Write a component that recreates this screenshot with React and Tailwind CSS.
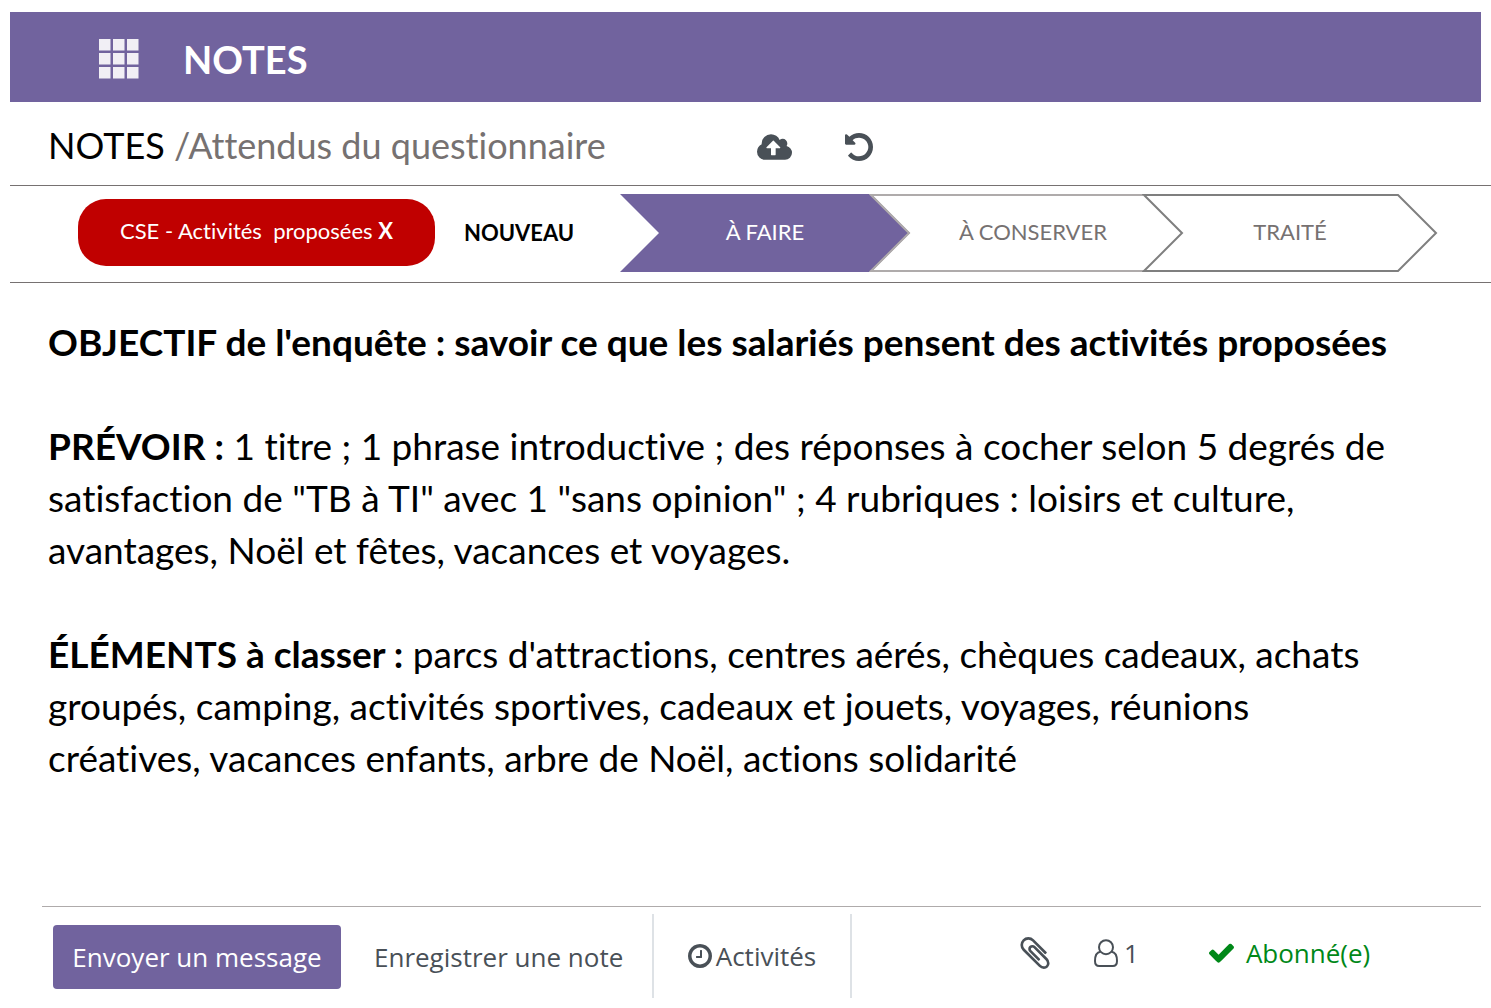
const steps = [
  {
    label: 'À FAIRE',
    box: 'w-[290px]',
    text: 'text-white',
    shape: 'fill-[#71639e] stroke-none',
    viewBox: '0 0 290 78',
    points: '0,0 251,0 290,39 251,78 0,78 39,39 0,0',
  },
  {
    label: 'À CONSERVER',
    box: '-ml-[41px] w-[328px]',
    text: 'text-[#767171]',
    shape: 'fill-none stroke-[#afabab]',
    viewBox: '0 0 328 78',
    points: '274,1 2,1 40,39 2,77 288,77',
  },
  {
    label: 'TRAITÉ',
    box: '-ml-[55px] w-[296px]',
    text: 'text-[#767171]',
    shape: 'fill-none stroke-[#7f7f7f]',
    viewBox: '0 0 296 78',
    points: '2,1 256,1 294,39 256,77 2,77 40,39 2,1 256,1',
  },
]

export default function App() {
  return (
    <div className="min-h-screen bg-white pt-3 pl-[10px] text-black [font-variant-ligatures:none] font-['Lato',sans-serif]">
      {/* Header */}
      <header className="mr-[10px] flex h-[90px] items-center bg-[#71639e] pt-1 pl-[89px] text-white">
        <button type="button" aria-label="Applications">
          <AppsIcon />
        </button>
        <h1 className="ml-11 text-[38px] leading-[52px] font-bold">NOTES</h1>
      </header>

      {/* Breadcrumb */}
      <div className="flex h-[84px] items-center border-b border-[#767171] pt-[6px] pl-[38px]">
        <nav className="w-[709px] pb-1 text-[36px] leading-[52px] whitespace-nowrap">
          <a href="#notes">NOTES</a>{' '}
          <span className="text-[#767171]">/Attendus du questionnaire</span>
        </nav>
        <button type="button" aria-label="Enregistrer" className="text-[#495057]">
          <CloudUploadIcon />
        </button>
        <button type="button" aria-label="Annuler" className="ml-[53px] text-[#495057]">
          <UndoIcon />
        </button>
      </div>

      {/* Tag and status steps */}
      <div className="flex h-[97px] items-center border-b border-[#767171] pb-[3px] pl-[68px] text-[22px] whitespace-nowrap">
        <button
          type="button"
          className="h-[67px] w-[357px] shrink-0 rounded-[28px] bg-[#c00000] pb-1 text-white"
        >
          CSE - Activités&nbsp; proposées <b>X</b>
        </button>
        <button type="button" className="ml-[29px] w-[156px] shrink-0 text-left font-bold">
          NOUVEAU
        </button>
        {steps.map(step => (
          <Step key={step.label} {...step} />
        ))}
      </div>

      {/* Note */}
      <main className="min-h-[623px] space-y-[52px] pt-[33px] pl-[38px] text-[37px] leading-[52px] whitespace-nowrap">
        <p className="font-bold">
          OBJECTIF de l'enquête : savoir ce que les salariés pensent des activités proposées
        </p>
        <p>
          <b>PRÉVOIR :</b> 1 titre ; 1 phrase introductive ; des réponses à cocher selon 5 degrés de
          <br />
          satisfaction de "TB à TI" avec 1 "sans opinion" ; 4 rubriques : loisirs et culture,
          <br />
          avantages, Noël et fêtes, vacances et voyages.
        </p>
        <p>
          <b>ÉLÉMENTS à classer :</b> parcs d'attractions, centres aérés, chèques cadeaux, achats
          <br />
          groupés, camping, activités sportives, cadeaux et jouets, voyages, réunions
          <br />
          créatives, vacances enfants, arbre de Noël, actions solidarité
        </p>
      </main>

      {/* Chatter */}
      <footer className="mr-[10px] ml-8 flex h-[92px] items-center border-t border-[#afabab] pt-[7px] pl-[11px] text-[26px] text-[#495057] whitespace-nowrap font-['Open_Sans',sans-serif]">
        <button
          type="button"
          className="mt-px h-16 w-[288px] shrink-0 rounded-[4px] bg-[#71639e] pt-px text-white"
        >
          Envoyer un message
        </button>
        <button type="button" className="w-[311px] shrink-0 pt-[3px] pl-[33px] text-left">
          Enregistrer une note
        </button>
        <button
          type="button"
          className="flex h-[84px] w-[200px] shrink-0 items-center justify-center gap-1 border-x-2 border-[#dee2e6]"
        >
          <ClockIcon />
          Activités
        </button>
        <div className="ml-[168px] flex items-center pb-[6px]">
          <button type="button" aria-label="Pièces jointes">
            <PaperclipIcon />
          </button>
          <button type="button" aria-label="Abonnés" className="ml-11 flex items-center gap-[6px]">
            <UserIcon />1
          </button>
          <button type="button" className="ml-[70px] flex items-center gap-3 text-[#008818]">
            <CheckIcon />
            Abonné(e)
          </button>
        </div>
      </footer>
    </div>
  )
}

function Step({ label, box, text, shape, viewBox, points }) {
  return (
    <button type="button" className={`grid h-[78px] shrink-0 place-items-center ${box} ${text}`}>
      <svg viewBox={viewBox} className="col-start-1 row-start-1 h-full w-full" aria-hidden="true">
        <polyline points={points} className={shape} strokeWidth="2" />
      </svg>
      <span className="col-start-1 row-start-1 pb-[2px]">{label}</span>
    </button>
  )
}

function AppsIcon() {
  return (
    <svg viewBox="0 0 40 40" className="h-10 w-10" fill="#f1eff5" aria-hidden="true">
      {[0, 14, 28].map(y =>
        [0, 14, 28].map(x => <rect key={`${x}-${y}`} x={x} y={y} width="11.5" height="11.5" />)
      )}
    </svg>
  )
}

function CloudUploadIcon() {
  return (
    <svg viewBox="0 128 1920 1408" className="h-[26px] w-[35px]" fill="currentColor" aria-hidden="true">
      <path d="M1280 864q0-14-9-23l-352-352q-9-9-23-9t-23 9l-351 351q-10 12-10 24 0 14 9 23t23 9h224v352q0 13 9.5 22.5t22.5 9.5h192q13 0 22.5-9.5t9.5-22.5v-352h224q13 0 22.5-9.5t9.5-22.5zm640 288q0 159-112.5 271.5t-271.5 112.5h-1088q-185 0-316.5-131.5t-131.5-316.5q0-130 70-240t188-165q-2-30-2-43 0-212 150-362t362-150q156 0 285.5 87t188.5 231q71-62 166-62 106 0 181 75t75 181q0 76-41 138 130 31 213.5 135.5t83.5 238.5z" />
    </svg>
  )
}

function UndoIcon() {
  return (
    <svg viewBox="128 128 1536 1536" className="h-7 w-7" fill="currentColor" aria-hidden="true">
      <path d="M1664 896q0 156-61 298t-164 245-245 164-298 61q-172 0-327-72.5t-264-204.5q-7-10-6.5-22.5t8.5-20.5l137-138q10-9 25-9 16 2 23 12 73 95 179 147t225 52q104 0 198.5-40.5t163.5-109.5 109.5-163.5 40.5-198.5-40.5-198.5-109.5-163.5-163.5-109.5-198.5-40.5q-98 0-188 35.5t-160 101.5l137 138q31 30 14 69-17 40-59 40h-448q-26 0-45-19t-19-45v-448q0-42 40-59 39-17 69 14l130 129q107-101 244.5-156.5t284.5-55.5q156 0 298 61t245 164 164 245 61 298z" />
    </svg>
  )
}

function ClockIcon() {
  return (
    <svg viewBox="128 128 1536 1536" className="h-6 w-6" fill="currentColor" aria-hidden="true">
      <path d="M1024 544v448q0 14-9 23t-23 9h-320q-14 0-23-9t-9-23v-64q0-14 9-23t23-9h224v-352q0-14 9-23t23-9h64q14 0 23 9t9 23zm416 352q0-148-73-273t-198-198-273-73-273 73-198 198-73 273 73 273 198 198 273 73 273-73 198-198 73-273zm224 0q0 209-103 385.5t-279.5 279.5-385.5 103-385.5-103-279.5-279.5-103-385.5 103-385.5 279.5-279.5 385.5-103 385.5 103 279.5 279.5 103 385.5z" />
    </svg>
  )
}

function PaperclipIcon() {
  return (
    <svg viewBox="192 128 1408 1536" className="h-8 w-[30px]" fill="currentColor" aria-hidden="true">
      <path d="M1596 1385q0 117-79 196t-196 79q-135 0-235-100l-777-776q-113-115-113-271 0-159 110-270t269-111q158 0 273 113l605 606q10 10 10 22 0 16-30.5 46.5t-46.5 30.5q-13 0-23-10l-606-607q-79-77-181-77-106 0-179 75t-73 181q0 105 76 181l776 777q63 63 145 63 64 0 106-42t42-106q0-82-63-145l-581-581q-26-24-60-24-29 0-48 19t-19 48q0 32 25 59l410 410q10 10 10 22 0 16-31 47t-47 31q-12 0-22-10l-410-410q-63-61-63-149 0-82 57-139t139-57q88 0 149 63l581 581q100 98 100 235z" />
    </svg>
  )
}

function UserIcon() {
  return (
    <svg
      viewBox="0 0 24 28"
      className="h-7 w-6"
      fill="none"
      stroke="currentColor"
      strokeWidth="2"
      aria-hidden="true"
    >
      <circle cx="12" cy="8.2" r="7" />
      <path d="M6.500 12.800C2.800 13.300 1 17 1 22c0 3.400 1.800 5 4.200 5h13.600c2.400 0 4.200-1.600 4.200-5 0-5-1.800-8.700-5.500-9.200" />
    </svg>
  )
}

function CheckIcon() {
  return (
    <svg viewBox="121 308 1550 1214" className="h-5 w-[25px]" fill="currentColor" aria-hidden="true">
      <path d="M1671 566q0 40-28 68l-724 724-136 136q-28 28-68 28t-68-28l-136-136-362-362q-28-28-28-68t28-68l136-136q28-28 68-28t68 28l294 295 656-657q28-28 68-28t68 28l136 136q28 28 28 68z" />
    </svg>
  )
}
